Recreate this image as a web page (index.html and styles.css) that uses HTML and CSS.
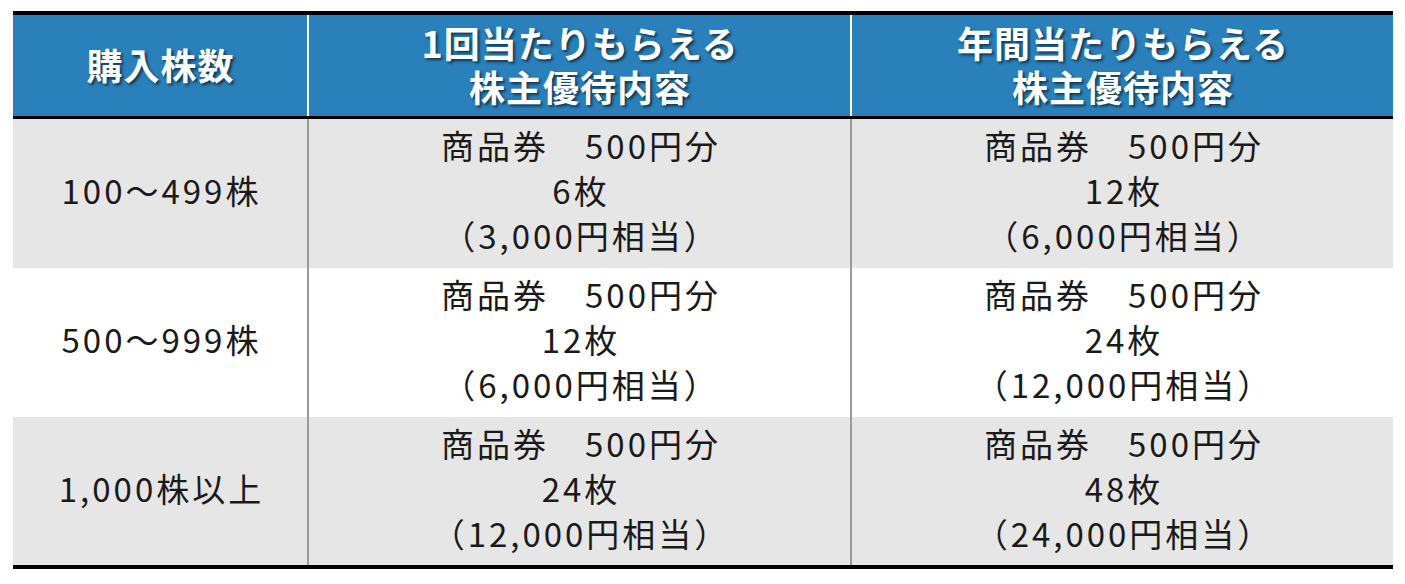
FILE: index.html
```html
<!DOCTYPE html>
<html lang="ja">
<head>
<meta charset="utf-8">
<link rel="stylesheet" href="styles.css">
</head>
<body>
<div class="table">
  <div class="head">
    <div class="hcell"><span>購入株数</span></div>
    <div class="hcell"><span>1回当たりもらえる<br>株主優待内容</span></div>
    <div class="hcell"><span>年間当たりもらえる<br>株主優待内容</span></div>
  </div>
  <div class="row grey">
    <div class="cell"><span>100～499株</span></div>
    <div class="cell"><span>商品券　500円分<br>6枚<br>（3,000円相当）</span></div>
    <div class="cell"><span>商品券　500円分<br>12枚<br>（6,000円相当）</span></div>
  </div>
  <div class="row">
    <div class="cell"><span>500～999株</span></div>
    <div class="cell"><span>商品券　500円分<br>12枚<br>（6,000円相当）</span></div>
    <div class="cell"><span>商品券　500円分<br>24枚<br>（12,000円相当）</span></div>
  </div>
  <div class="row grey last">
    <div class="cell"><span>1,000株以上</span></div>
    <div class="cell"><span>商品券　500円分<br>24枚<br>（12,000円相当）</span></div>
    <div class="cell"><span>商品券　500円分<br>48枚<br>（24,000円相当）</span></div>
  </div>
</div>
</body>
</html>
```
FILE: styles.css
```css
html, body {
  margin: 0;
  padding: 0;
  background: #ffffff;
}
body {
  font-family: "Noto Sans CJK JP", "Noto Sans", sans-serif;
}
.table {
  width: 1380px;
  margin: 11px 0 0 13px;
  border-top: 4px solid #000;
  border-bottom: 4px solid #000;
}
.head, .row {
  display: grid;
  grid-template-columns: 294px 543px 543px;
}
.head {
  height: 101px;
  background: #2a80bb;
  border-bottom: 3px solid #000;
}
.hcell, .cell {
  box-sizing: border-box;
  display: flex;
  align-items: center;
  justify-content: center;
  text-align: center;
}
.hcell {
  padding-bottom: 4px;
}
.hcell + .hcell {
  border-left: 2px solid #ffffff;
}
.hcell span {
  color: #ffffff;
  font-weight: 700;
  font-size: 36px;
  line-height: 44px;
  letter-spacing: 1px;
  padding-left: 1px;
  text-shadow: 2px 2px 3px rgba(0, 0, 0, 0.6);
}
.row {
  height: 149px;
  background: #ffffff;
}
.row.grey {
  background: #e6e6e6;
}
.row.last {
  height: 148px;
}
.cell {
  padding-bottom: 6px;
}
.cell + .cell {
  border-left: 2px solid #9a9a9a;
}
.cell span {
  color: #1a1a1a;
  font-size: 33px;
  line-height: 45px;
  letter-spacing: 3px;
  padding-left: 3px;
}
```
